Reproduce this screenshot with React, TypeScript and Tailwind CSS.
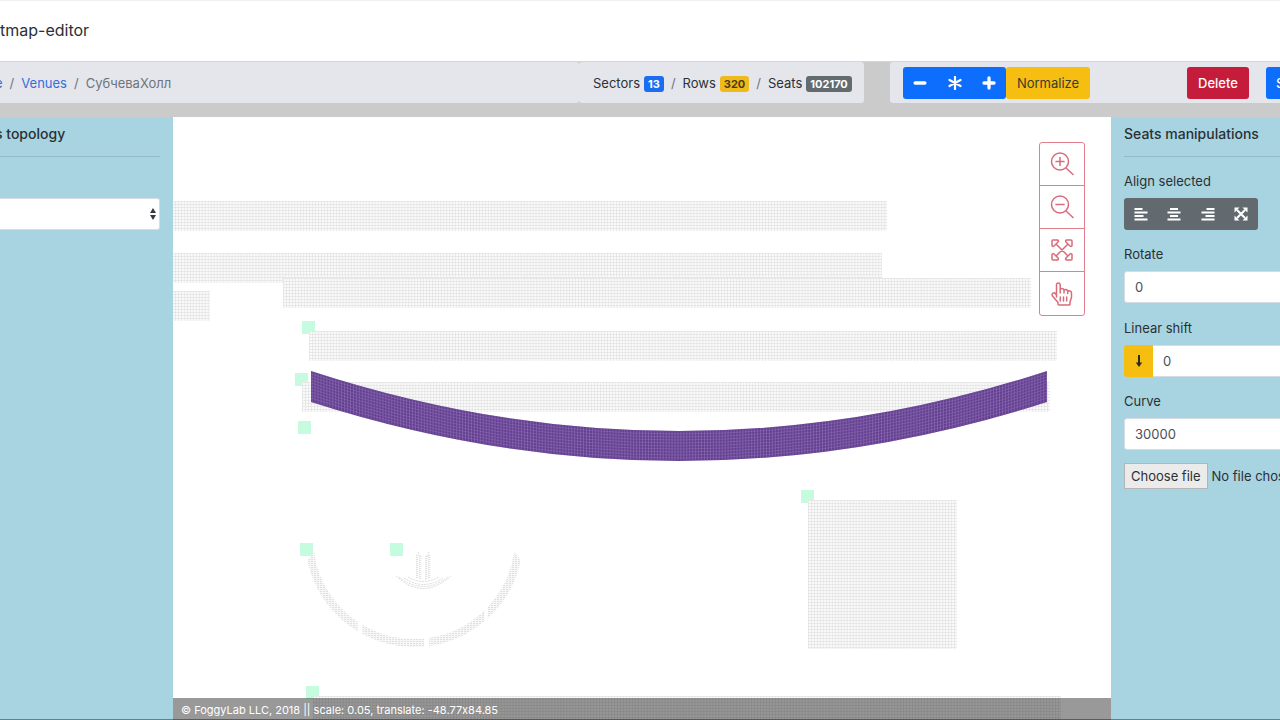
import type { ReactNode } from "react";

const blocks = [
  { x: -4, y: 84, w: 718, h: 30 },
  { x: -4, y: 136, w: 713, h: 30 },
  { x: 110, y: 161, w: 748, h: 30 },
  { x: -4, y: 174, w: 41, h: 30 },
  { x: 136, y: 214, w: 748, h: 30 },
  { x: 129, y: 265, w: 748, h: 30 },
  { x: 635, y: 383, w: 149, h: 149 },
  { x: 140, y: 579, w: 748, h: 30 },
];

const anchors = [
  [129, 204],
  [122, 256],
  [125, 304],
  [628, 373],
  [127, 426],
  [217, 426],
  [133, 569],
];

const curveRows = [3, 6, 9, 12, 15, 18, 21, 24, 27];

// angles of every sector in degrees from the right, clockwise
const ringSectors = [
  { outer: [12, 47.5], inner: [7.5, 43] },
  { outer: [49.6, 82], inner: [45.6, 81.4] },
  { outer: [84.7, 118.2], inner: [84.3, 120.7] },
  { outer: [121.2, 168], inner: [124, 172.5] },
];

function ringPoint(r: number, deg: number) {
  const a = (deg * Math.PI) / 180;
  return `${241 + r * Math.cos(a)} ${421 + r * Math.sin(a)}`;
}

function ringPath(outer: number[], inner: number[]) {
  return `M${ringPoint(109, outer[0])}A109 109 0 0 1 ${ringPoint(109, outer[1])}L${ringPoint(101, inner[1])}A101 101 0 0 0 ${ringPoint(101, inner[0])}Z`;
}

function SeatMap() {
  return (
    <svg className="absolute inset-0 h-full w-full" aria-label="Seat map">
      <defs>
        <pattern id="seats" width="2.98" height="3" patternUnits="userSpaceOnUse">
          <rect width="2.98" height="3" fill="#fafafa" />
          <path d="M0 .5H2.98M.5 0V3" stroke="#e2e2e2" strokeWidth=".7" />
        </pattern>
        <pattern id="ring" width="3" height="2" patternUnits="userSpaceOnUse">
          <rect width="3" height="2" fill="#f7f7f7" />
          <path d="M0 .5H2" stroke="#dadada" strokeWidth=".8" />
        </pattern>
        <pattern id="selected" width="2.95" height="3" patternUnits="userSpaceOnUse">
          <path d="M.5 0V3" stroke="#8f70b6" strokeWidth=".6" />
        </pattern>
      </defs>

      {anchors.map(([x, y]) => (
        <rect key={`${x}-${y}`} x={x} y={y} width="13" height="13" fill="#c5fce0" />
      ))}

      {blocks.map((b) => (
        <g key={`${b.x}-${b.y}`} transform={`translate(${b.x} ${b.y})`}>
          <rect width={b.w} height={b.h} fill="url(#seats)" />
        </g>
      ))}

      <path d="M138 254Q506 374 874 254V285Q506 403 138 285Z" fill="#633f90" />
      <path d="M138 254Q506 374 874 254V285Q506 403 138 285Z" fill="url(#selected)" />
      {curveRows.map((d) => (
        <path
          key={d}
          d={`M138 ${254 + d}Q506 ${374 + d} 874 ${254 + d}`}
          fill="none"
          stroke="#9678bd"
          strokeWidth=".4"
        />
      ))}

      {ringSectors.map((s) => (
        <path key={s.outer[0]} d={ringPath(s.outer, s.inner)} fill="url(#ring)" />
      ))}

      <g fill="none" stroke="#d0d0d0" strokeWidth=".8" strokeDasharray="2 1">
        {[0, 2, 4, 6, 8, 10, 12, 14, 16, 18, 20, 22].map((d) => (
          <path key={d} d={`M243 ${438 + d}l6 2M252 ${440 + d}l6-2`} />
        ))}
        <path d="M245 435l2 4M256 435l-2 4" />
        <path d="M223 459Q250 484 278 459M226 460Q250 479 275 460M231 461Q250 474 270 461M235 460Q250 469 266 460" />
      </g>
    </svg>
  );
}

function Glyph({ children }: { children: ReactNode }) {
  return (
    <svg viewBox="0 0 14 14" className="h-[14px] w-[14px]" fill="none" stroke="currentColor" aria-hidden="true">
      {children}
    </svg>
  );
}

function ToolIcon({ children }: { children: ReactNode }) {
  return (
    <svg
      viewBox="0 0 24 24"
      className="h-6 w-6"
      fill="none"
      stroke="currentColor"
      strokeWidth="1.5"
      strokeLinecap="round"
      strokeLinejoin="round"
      aria-hidden="true"
    >
      {children}
    </svg>
  );
}

const mapTools = [
  {
    name: "Zoom in",
    icon: <path d="M16 16L23 22.500M10 5.500v8M6 9.500h8M18.500 9.500a8.500 8.500 0 1 1-17 0a8.500 8.500 0 0 1 17 0Z" />,
  },
  {
    name: "Zoom out",
    icon: <path d="M16 16L23 22.500M6 9.500h8M18.500 9.500a8.500 8.500 0 1 1-17 0a8.500 8.500 0 0 1 17 0Z" />,
  },
  {
    name: "Fit to screen",
    icon: (
      <path d="M6 6l12 12M18 6L6 18M2 7.500V3Q2 2 3 2H7.500Q9 2.500 8 4L4 8Q2.500 9 2 7.500ZM22 7.500V3Q22 2 21 2H16.500Q15 2.500 16 4L20 8Q21.500 9 22 7.500ZM2 16.500V21Q2 22 3 22H7.500Q9 21.500 8 20L4 16Q2.500 15 2 16.500ZM22 16.500V21Q22 22 21 22H16.500Q15 21.500 16 20L20 16Q21.500 15 22 16.500Z" />
    ),
  },
  {
    name: "Select",
    icon: (
      <path d="M6.500 15V2.700Q6.500 1 8.300 1T10.200 2.700V9.500M10.200 11V8Q10.500 6.500 12 6.500T14 8V11M14 8.500Q14.500 7.300 16 7.500T17.700 9.500V11.500M17.700 9.500Q18.500 8.500 20 9T21.500 11V15.500L20 20V22.500Q20 23 19 23H9Q8 23 8 22V20.500L2.500 14Q1.500 12 3 11T6.500 13M10.300 15v4M13.500 15v4M16.700 15v4" />
    ),
  },
];

const alignTools = [
  { name: "Align left", icon: <path d="M.5 2h8M.5 5.500h13M.5 9h9M.5 12.500h13" strokeWidth="2" /> },
  { name: "Align center", icon: <path d="M3 2h8M.5 5.500h13M3 9h8M.5 12.500h13" strokeWidth="2" /> },
  { name: "Align right", icon: <path d="M5.500 2h8M.5 5.500h13M4.500 9h9M.5 12.500h13" strokeWidth="2" /> },
  {
    name: "Expand",
    icon: (
      <>
        <path d="M3 3l8 8M11 3l-8 8" strokeWidth="2" />
        <path d="M.5.5h5l-5 5ZM13.500.5v5l-5-5ZM.5 13.500v-5l5 5ZM13.500 13.500h-5l5-5Z" fill="currentColor" stroke="none" />
      </>
    ),
  },
];

const inputClass =
  "h-8 w-[190px] rounded-[3px] border border-[#d5dde2] bg-white px-[10px] text-[#495057] outline-none";

export default function App() {
  return (
    <div className="relative flex min-h-screen flex-col overflow-hidden bg-white font-['Inter','Liberation_Sans',sans-serif] text-[13px] text-[#2b3035]">
      <header className="flex h-[61px] items-center border-t border-[#f0f0f0] pb-[2px] text-base">tmap-editor</header>

      <div className="flex h-14 items-start border-t border-[#d5d5d5] bg-[#cbcbcb]">
        <nav aria-label="Breadcrumb" className="flex h-[41px] flex-1 items-center rounded-r-[3px] bg-[#e5e6eb] pt-[2px]">
          <ol className="-ml-[5px] flex gap-[7px] text-[#6c757d]">
            <li><a href="#home" className="text-[#346edb]">e</a></li>
            <li>/</li>
            <li><a href="#venues" className="text-[#346edb]">Venues</a></li>
            <li>/</li>
            <li>СубчеваХолл</li>
          </ol>
        </nav>
        <div className="flex h-[41px] w-[285px] items-center gap-[7px] rounded-[3px] bg-[#e5e6eb] pl-[14px] pt-[2px]">
          <span className="flex items-center gap-1">
            Sectors <b className="rounded-[3px] bg-[#1a6df0] px-1 text-[11px] leading-4 text-white">13</b>
          </span>
          <span className="text-[#6c757d]">/</span>
          <span className="flex items-center gap-1">
            Rows <b className="rounded-[3px] bg-[#f0b91c] px-1 text-[11px] leading-4 text-[#4a3c12]">320</b>
          </span>
          <span className="text-[#6c757d]">/</span>
          <span className="flex items-center gap-1">
            Seats <b className="rounded-[3px] bg-[#626c70] px-1 text-[11px] leading-4 text-white">102170</b>
          </span>
        </div>
        <div className="ml-[26px] flex h-[41px] w-[390px] items-center overflow-hidden rounded-l-[3px] bg-[#e5e6eb] pl-[13px]">
          <div className="flex h-8 shrink-0 rounded-[3px] bg-[#0d6efd] text-white">
            <button aria-label="Decrease" className="flex w-[34px] items-center justify-center">
              <Glyph><path d="M2.200 7h9.600" strokeWidth="3.500" strokeLinecap="round" /></Glyph>
            </button>
            <button aria-label="Reset" className="flex w-[35px] items-center justify-center">
              <Glyph><path d="M7 1v12M1.500 4l11 6M12.500 4l-11 6" strokeWidth="2.200" strokeLinecap="round" /></Glyph>
            </button>
            <button aria-label="Increase" className="flex w-[34px] items-center justify-center">
              <Glyph><path d="M2 7h10M7 2v10" strokeWidth="3.300" strokeLinecap="round" /></Glyph>
            </button>
          </div>
          <button className="h-8 w-[84px] shrink-0 rounded-[3px] bg-[#f5be10] pt-[2px] text-[#3b3a30]">Normalize</button>
          <button className="ml-[97px] h-8 w-[62px] shrink-0 rounded-[3px] bg-[#c61c3c] pt-[2px] font-medium text-white">Delete</button>
          <button className="ml-[17px] h-8 shrink-0 rounded-[3px] bg-[#0d6efd] px-[10px] pt-[2px] font-medium text-white">S</button>
        </div>
      </div>

      <main className="flex flex-1">
        <aside className="w-[173px] shrink-0 overflow-hidden bg-[#a7d4e0] pr-[13px]">
          <h2 className="-ml-[5px] pt-[7px] text-sm font-medium leading-5">s topology</h2>
          <hr className="mt-3 border-[#93bcc8]" />
          <div className="relative mt-[41px]">
            <select
              aria-label="Topology"
              className="h-8 w-full appearance-none rounded-r-[3px] border border-l-0 border-[#d5dde2] bg-white"
            />
            <svg viewBox="0 0 8 12" className="pointer-events-none absolute right-1 top-[10px] h-3 w-[6px]" preserveAspectRatio="none" fill="#343a40" aria-hidden="true">
              <path d="M4 0l4 5H0ZM4 12l4-5H0Z" />
            </svg>
          </div>
        </aside>

        <section className="relative flex-1 overflow-hidden">
          <SeatMap />
          <div className="absolute right-[26px] top-[25px] flex w-[46px] flex-col divide-y divide-[#e2808d] rounded-[3px] border border-[#e2808d] bg-white text-[#d96b7a]">
            {mapTools.map((tool) => (
              <button key={tool.name} aria-label={tool.name} className="flex h-[43px] items-center justify-center">
                <ToolIcon>{tool.icon}</ToolIcon>
              </button>
            ))}
          </div>
          <footer className="absolute inset-x-0 bottom-0 h-[22px] bg-black/40 px-2 text-[11px] leading-6 text-white [font-feature-settings:'calt'_0]">
            © FoggyLab LLC, 2018 || scale: 0.05, translate: -48.77x84.85
          </footer>
        </section>

        <aside className="w-[169px] shrink-0 overflow-hidden bg-[#a7d4e0] pl-[13px]">
          <h2 className="pt-[7px] text-sm font-medium leading-5">Seats manipulations</h2>
          <hr className="mt-3 border-[#93bcc8]" />
          <p className="mt-[14px] leading-5">Align selected</p>
          <div className="mt-[7px] flex h-8 w-[134px] rounded-[3px] bg-[#626a70] text-white">
            {alignTools.map((tool) => (
              <button key={tool.name} aria-label={tool.name} className="flex flex-1 items-center justify-center">
                <Glyph>{tool.icon}</Glyph>
              </button>
            ))}
          </div>
          <label htmlFor="rotate" className="mt-[14px] block leading-5">Rotate</label>
          <input id="rotate" defaultValue="0" className={`mt-[7px] block ${inputClass}`} />
          <label htmlFor="shift" className="mt-[15px] block leading-5">Linear shift</label>
          <div className="mt-[7px] flex">
            <button aria-label="Shift down" className="flex h-8 w-[29px] shrink-0 items-center justify-center rounded-l-[3px] bg-[#f5be10] text-[#2b2b20]">
              <Glyph>
                <path d="M7 1v10" strokeWidth="2" />
                <path d="M3.800 8.500h6.400L7 13Z" fill="currentColor" stroke="none" />
              </Glyph>
            </button>
            <input id="shift" defaultValue="0" className="h-8 w-[160px] border border-l-0 border-[#d5dde2] bg-white px-[10px] text-[#495057] outline-none" />
          </div>
          <label htmlFor="curve" className="mt-[14px] block leading-5">Curve</label>
          <input id="curve" defaultValue="30000" className={`mt-[7px] block ${inputClass}`} />
          <label className="mt-[13px] flex w-[240px] items-center gap-1 leading-6">
            <input type="file" className="sr-only" />
            <span className="border border-[#b5b5b5] bg-[#ebebeb] px-[6px]">Choose file</span>
            <span>No file chosen</span>
          </label>
        </aside>
      </main>
      <div className="absolute inset-x-0 bottom-0 h-px bg-black/40" />
    </div>
  );
}
